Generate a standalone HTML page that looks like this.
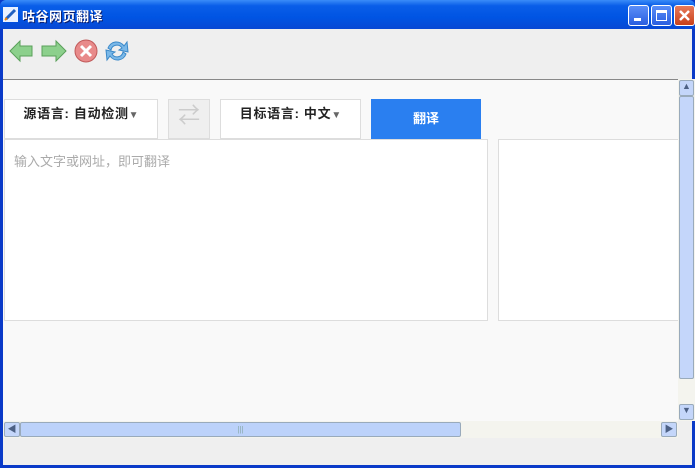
<!DOCTYPE html>
<html><head><meta charset="utf-8"><style>
*{margin:0;padding:0;box-sizing:border-box}
body{width:695px;height:468px;overflow:hidden;position:relative;background:#0a3ac8;font-family:"Liberation Sans","Noto Sans CJK SC",sans-serif}
.abs{position:absolute}
#title{left:0;top:0;width:695px;height:29px;background:linear-gradient(#3a8cf8 0%,#0a5ee8 20%,#0054e3 60%,#0848d4 100%);border-radius:6px 6px 0 0}
#title span{position:absolute;left:22px;top:6px;color:#fff;font-weight:bold;font-size:13px;letter-spacing:0.5px;text-shadow:1px 1px #0a1e6e}
.tb{top:5px;width:21px;height:21px;border:1px solid #fff;border-radius:3px;background:linear-gradient(#5a8ef8,#2a5ee0)}
#client{left:3px;top:29px;width:689px;height:436px;background:#efefef}
#content{left:3px;top:79px;width:675px;height:342px;background:#f9f9f9;border-top:1px solid #888}
.box{background:#fff;border:1px solid #ddd}
.btn{background:#fff;border:1px solid #ddd;font-size:13px;font-weight:bold;color:#222;text-align:center;line-height:28px;letter-spacing:0.7px}
.btn span{font-size:10px;color:#666;letter-spacing:0}
</style></head><body>
<div id="title" class="abs"><svg class="abs" style="left:3px;top:7px" width="15" height="15"><rect x="0" y="0" width="15" height="15" fill="#e8f0ff"/><path d="M3 12 L12 3" stroke="#2060c0" stroke-width="3"/><path d="M2 13 L4 11" stroke="#f08000" stroke-width="2"/></svg><span>咕谷网页翻译</span>
<div class="abs tb" style="left:628px"><div class="abs" style="left:5px;top:12px;width:7px;height:3px;background:#fff"></div></div>
<div class="abs tb" style="left:651px"><div class="abs" style="left:4px;top:4px;width:11px;height:11px;border:1px solid #fff;border-top-width:3px"></div></div>
<div class="abs tb" style="left:674px;background:linear-gradient(#e87a5a,#c8401a)"><svg width="19" height="19"><path d="M5 5L14 14M14 5L5 14" stroke="#fff" stroke-width="2.5"/></svg></div>
</div>
<div id="client" class="abs"></div>
<svg class="abs" style="left:8px;top:38px" width="125" height="26">
<path d="M2 13 L12 3 L12 8 L24 8 L24 18 L12 18 L12 23 Z" fill="#8cd08c" stroke="#5aa05a"/>
<path d="M58 13 L48 3 L48 8 L34 8 L34 18 L48 18 L48 23 Z" fill="#8cd08c" stroke="#5aa05a"/>
<circle cx="78" cy="13" r="11" fill="#e88a8a" stroke="#c05a5a"/><path d="M73 8L83 18M83 8L73 18" stroke="#fff" stroke-width="3"/>
<path d="M100 10 A9 9 0 0 1 116 8 L119 4 L120 14 L111 12 L114 10 A6 6 0 0 0 103 12Z" fill="#7ab8e8" stroke="#3a88c8"/>
<path d="M118 16 A9 9 0 0 1 102 18 L99 22 L98 12 L107 14 L104 16 A6 6 0 0 0 115 14Z" fill="#7ab8e8" stroke="#3a88c8"/>
</svg>
<div id="content" class="abs"></div>
<div class="abs btn" style="left:4px;top:99px;width:154px;height:40px">源语言: 自动检测<span>▼</span></div>
<div class="abs" style="left:168px;top:99px;width:42px;height:40px;background:#efefef;border:1px solid #ddd;color:#ccc;font-size:22px;text-align:center;line-height:32px">⇄</div>
<div class="abs btn" style="left:220px;top:99px;width:141px;height:40px">目标语言: 中文<span>▼</span></div>
<div class="abs" style="left:371px;top:99px;width:110px;height:40px;background:#2a7ff0;color:#fff;font-weight:bold;font-size:13px;text-align:center;line-height:40px">翻译</div>
<div class="abs box" style="left:4px;top:139px;width:484px;height:182px"><div style="color:#aaa;font-size:13px;margin:11px 0 0 9px">输入文字或网址，即可翻译</div></div>
<div class="abs box" style="left:498px;top:139px;width:182px;height:182px;border-right:none"></div>
<div class="abs" style="left:678px;top:79px;width:17px;height:342px;background:#f4f4ee"></div>
<div class="abs" style="left:679px;top:80px;width:15px;height:16px;background:#c4d6fa;border:1px solid #9ab;border-radius:2px;font-size:9px;text-align:center;color:#4d6185">▲</div>
<div class="abs" style="left:679px;top:96px;width:15px;height:283px;background:#c4d6fa;border:1px solid #9ab;border-radius:2px"></div>
<div class="abs" style="left:679px;top:404px;width:15px;height:16px;background:#c4d6fa;border:1px solid #9ab;border-radius:2px;font-size:9px;text-align:center;color:#4d6185">▼</div>
<div class="abs" style="left:3px;top:421px;width:675px;height:17px;background:#f4f4ee"></div>
<div class="abs" style="left:4px;top:422px;width:16px;height:15px;background:#c4d6fa;border:1px solid #9ab;border-radius:2px;font-size:9px;text-align:center;color:#4d6185;line-height:13px">◀</div>
<div class="abs" style="left:20px;top:422px;width:441px;height:15px;background:#bcd2fa;border:1px solid #9ab;border-radius:2px;font-size:8px;text-align:center;color:#8aa;line-height:13px">|||</div>
<div class="abs" style="left:661px;top:422px;width:16px;height:15px;background:#c4d6fa;border:1px solid #9ab;border-radius:2px;font-size:9px;text-align:center;color:#4d6185;line-height:13px">▶</div>
</body></html>
